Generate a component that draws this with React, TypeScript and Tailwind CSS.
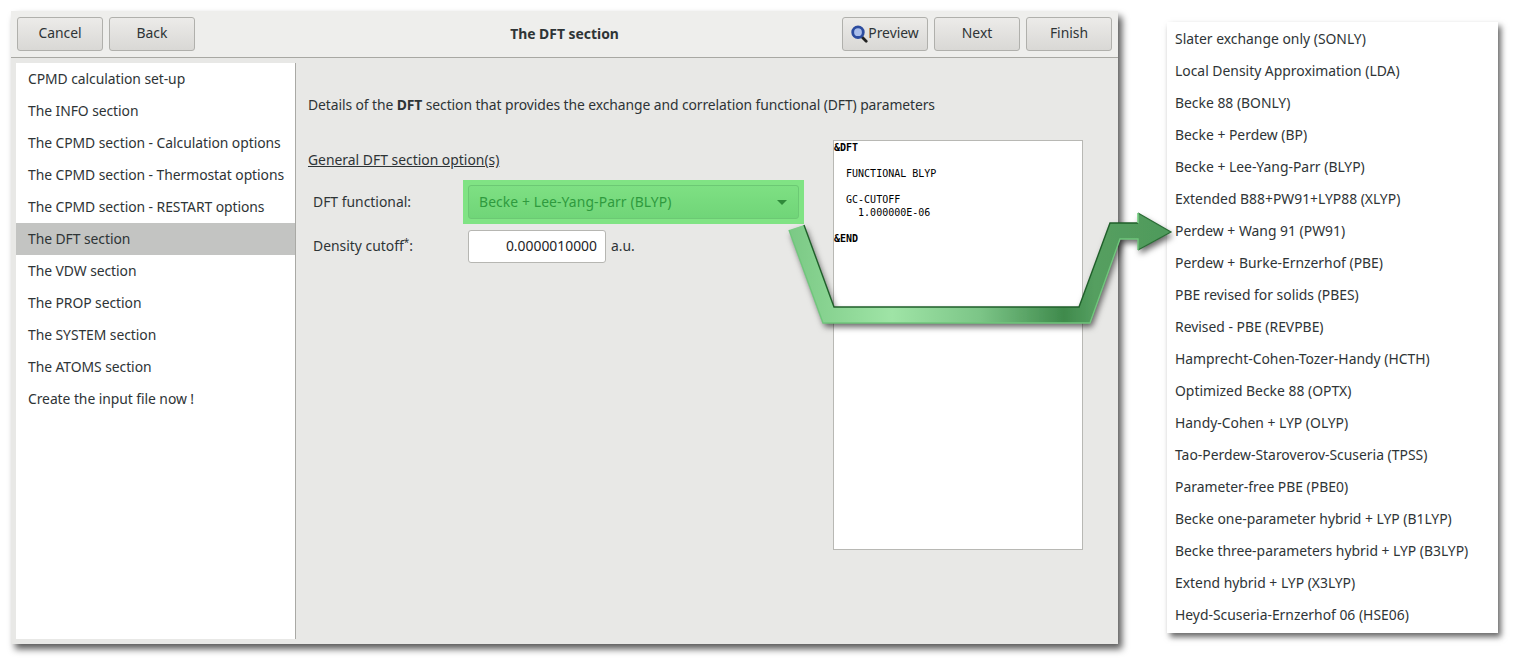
const sections = [
  'CPMD calculation set-up',
  'The INFO section',
  'The CPMD section - Calculation options',
  'The CPMD section - Thermostat options',
  'The CPMD section - RESTART options',
  'The DFT section',
  'The VDW section',
  'The PROP section',
  'The SYSTEM section',
  'The ATOMS section',
  'Create the input file now !',
]

const functionals = [
  'Slater exchange only (SONLY)',
  'Local Density Approximation (LDA)',
  'Becke 88 (BONLY)',
  'Becke + Perdew (BP)',
  'Becke + Lee-Yang-Parr (BLYP)',
  'Extended B88+PW91+LYP88 (XLYP)',
  'Perdew + Wang 91 (PW91)',
  'Perdew + Burke-Ernzerhof (PBE)',
  'PBE revised for solids (PBES)',
  'Revised - PBE (REVPBE)',
  'Hamprecht-Cohen-Tozer-Handy (HCTH)',
  'Optimized Becke 88 (OPTX)',
  'Handy-Cohen + LYP (OLYP)',
  'Tao-Perdew-Staroverov-Scuseria (TPSS)',
  'Parameter-free PBE (PBE0)',
  'Becke one-parameter hybrid + LYP (B1LYP)',
  'Becke three-parameters hybrid + LYP (B3LYP)',
  'Extend hybrid + LYP (X3LYP)',
  'Heyd-Scuseria-Ernzerhof 06 (HSE06)',
]

function ToolButton({ children }: { children: React.ReactNode }) {
  return (
    <button className="flex h-[34px] w-[86px] items-center justify-center rounded-[3px] border border-[#b0b0ac] bg-gradient-to-b from-[#ecebe9] to-[#d9d8d5] text-[#2e3436]">
      {children}
    </button>
  )
}

function Magnifier() {
  return (
    <svg width="17" height="18" viewBox="0 0 17 18">
      <path d="M11 12 L15.2 16.2" stroke="#222" strokeWidth="2.8" strokeLinecap="round" />
      <circle cx="7" cy="7.2" r="5.3" fill="#a9bdea" stroke="#2c4c9f" strokeWidth="2.8" />
    </svg>
  )
}

function Arrow() {
  const points =
    '789,230 804,225 834,307 1079,307 1110,223 1138,223 1138,213 1171,232 1138,250 1138,239 1120,239 1090,323 823,323'
  return (
    <svg className="pointer-events-none absolute left-0 top-0" width="1517" height="663" viewBox="0 0 1517 663">
      <defs>
        <linearGradient id="band" gradientUnits="userSpaceOnUse" x1="789" y1="0" x2="1171" y2="0">
          <stop offset="0" stopColor="#7bc985" />
          <stop offset="0.27" stopColor="#9fe4a6" />
          <stop offset="0.5" stopColor="#7cc587" />
          <stop offset="0.72" stopColor="#3f8a4c" />
          <stop offset="0.8" stopColor="#559f60" />
          <stop offset="1" stopColor="#4f9a5b" />
        </linearGradient>
        <filter id="drop" x="-10%" y="-10%" width="120%" height="130%">
          <feDropShadow dx="2" dy="4" stdDeviation="3" floodColor="#000" floodOpacity="0.6" />
        </filter>
      </defs>
      <polygon points={points} fill="url(#band)" filter="url(#drop)" />
      <polyline points="804,225 834,307 1079,307 1110,223 1138,223" fill="none" stroke="#1f5f2a" strokeWidth="1.4" />
      <polyline points="1138,213 1171,232 1138,250" fill="none" stroke="#2a6b35" strokeWidth="1.2" />
      <polyline points="1138,223 1138,213" fill="none" stroke="#74cc80" strokeWidth="1.6" />
      <polyline points="1138,250 1138,239 1120,239 1090,323 823,323 789,230" fill="none" stroke="#70c67c" strokeWidth="1.4" />
    </svg>
  )
}

export default function App() {
  return (
    <div className="relative h-[663px] w-[1517px] overflow-hidden bg-white pl-[11px] pt-[11px] font-['Noto_Sans',sans-serif] text-[13.9px] text-[#2e3436]">
      <div className="flex items-start">
        <div className="flex h-[633px] w-[1107px] flex-col rounded-t-[4px] bg-[#e8e8e6] shadow-[4px_5px_7px_rgba(0,0,0,0.65)]">
          <header className="flex h-[47px] shrink-0 items-center border-b border-[#a8a8a3] bg-[#eeeeec] px-[6px] pb-px">
            <div className="flex flex-1 gap-[6px]">
              <ToolButton>Cancel</ToolButton>
              <ToolButton>Back</ToolButton>
            </div>
            <div className="pt-[2px] font-bold">The DFT section</div>
            <div className="flex flex-1 justify-end gap-[6px]">
              <ToolButton>
                <Magnifier />
                Preview
              </ToolButton>
              <ToolButton>Next</ToolButton>
              <ToolButton>Finish</ToolButton>
            </div>
          </header>
          <div className="flex min-h-0 flex-1 pb-[5px] pl-[5px] pt-[5px]">
            <nav className="w-[280px] shrink-0 border-r border-[#a9a9a5] bg-white tracking-[-0.06px]">
              {sections.map((s) => (
                <div
                  key={s}
                  className={`flex h-[32px] items-center pl-[12px] ${s === 'The DFT section' ? 'bg-[#c3c4c2]' : ''}`}
                >
                  {s}
                </div>
              ))}
            </nav>
            <main className="min-w-0 flex-1 pl-[12px] pt-[33px]">
              <p className="whitespace-nowrap leading-[18px] tracking-[-0.09px]">
                Details of the <b>DFT</b> section that provides the exchange and correlation functional (DFT) parameters
              </p>
              <div className="mt-[26px] flex items-start">
                <div className="w-[525px] shrink-0 pt-[11px]">
                  <h2 className="leading-[18px] underline">General DFT section option(s)</h2>
                  <div className="mt-[11px] flex items-center pl-[5px]">
                    <span className="w-[155px]">DFT functional:</span>
                    <div className="flex h-[44px] w-[341px] -translate-x-[5px] items-center bg-[#80e384] p-[5px]">
                      <div className="flex h-[34px] w-full items-center justify-between rounded-[3px] border border-[#6cc974] bg-gradient-to-b from-[#7ee083] to-[#70d578] pl-[10px] pr-[11px] tracking-[0.1px] text-[#2f9a3e]">
                        Becke + Lee-Yang-Parr (BLYP)
                        <span className="h-0 w-0 border-x-[5px] border-t-[5px] border-x-transparent border-t-[#2f8a3a]" />
                      </div>
                    </div>
                  </div>
                  <div className="mt-[6px] flex items-center pl-[5px]">
                    <span className="w-[155px]">
                      Density cutoff<sup className="text-[10px]">*</sup>:
                    </span>
                    <div className="flex h-[33px] w-[138px] items-center justify-end rounded-[3px] border border-[#b6b6b2] bg-white pr-[8px] text-[#1f2426]">
                      0.0000010000
                    </div>
                    <span className="ml-[5px]">a.u.</span>
                  </div>
                </div>
                <div className="h-[410px] w-[250px] shrink-0 border border-[#b8b8b4] bg-white text-[10px] leading-[13px] text-black">
                  <pre className="font-['DejaVu_Sans_Mono',monospace]">
                    <b>&amp;DFT</b>
                    {'\n\n  FUNCTIONAL BLYP\n\n  GC-CUTOFF\n    1.000000E-06\n\n'}
                    <b>&amp;END</b>
                  </pre>
                </div>
              </div>
            </main>
          </div>
        </div>
        <ul className="ml-[49px] mt-[11px] h-[611px] w-[331px] bg-white shadow-[3px_4px_6px_rgba(0,0,0,0.6)]">
          {functionals.map((f) => (
            <li key={f} className="flex h-[32px] items-center whitespace-nowrap pl-[8px] pt-[2px]">
              {f}
            </li>
          ))}
        </ul>
      </div>
      <Arrow />
    </div>
  )
}
